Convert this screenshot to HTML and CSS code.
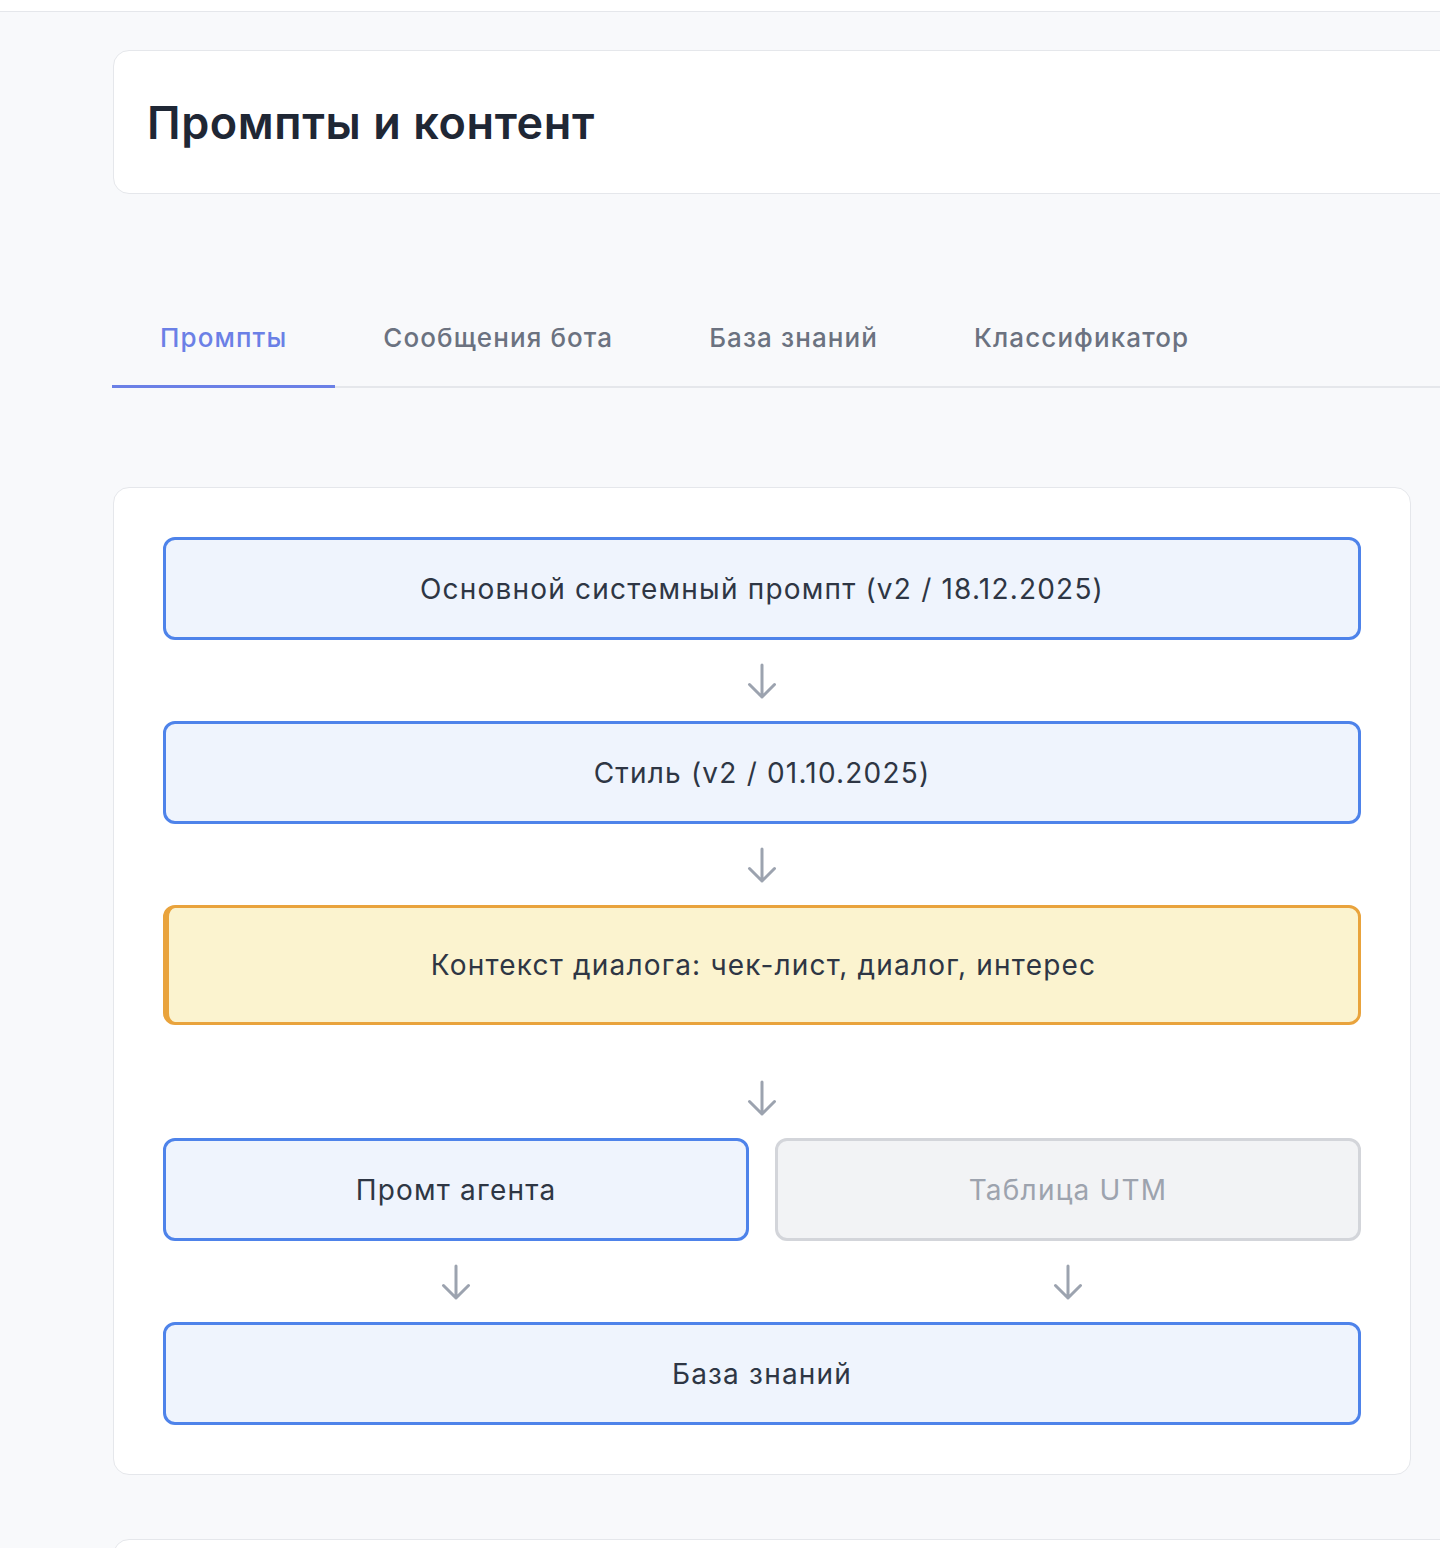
FILE: index.html
```html
<!DOCTYPE html>
<html lang="ru">
<head>
  <meta charset="UTF-8">
  <meta name="viewport" content="width=device-width, initial-scale=1.0">
  <title>Промпты и контент</title>
  <link rel="stylesheet" href="styles.css">
</head>
<body>
  <div class="top-strip"></div>
  <main class="page">
    <div class="header-card">
      <h1>Промпты и контент</h1>
    </div>

    <div class="tabs">
      <div class="tab active">Промпты</div>
      <div class="tab">Сообщения бота</div>
      <div class="tab">База знаний</div>
      <div class="tab">Классификатор</div>
    </div>

    <div class="flow-card">
      <div class="node">Основной системный промпт (v2 / 18.12.2025)</div>
      <div class="arrow">
        <svg width="30" height="36" viewBox="0 0 30 36"><path d="M15 2v32M2.5 21.5 15 34l12.5-12.5"/></svg>
      </div>
      <div class="node">Стиль (v2 / 01.10.2025)</div>
      <div class="arrow">
        <svg width="30" height="36" viewBox="0 0 30 36"><path d="M15 2v32M2.5 21.5 15 34l12.5-12.5"/></svg>
      </div>
      <div class="node node-context">Контекст диалога: чек-лист, диалог, интерес</div>
      <div class="arrow arrow-low">
        <svg width="30" height="36" viewBox="0 0 30 36"><path d="M15 2v32M2.5 21.5 15 34l12.5-12.5"/></svg>
      </div>
      <div class="pair">
        <div class="node">Промт агента</div>
        <div class="node node-off">Таблица UTM</div>
      </div>
      <div class="pair">
        <div class="arrow">
          <svg width="30" height="36" viewBox="0 0 30 36"><path d="M15 2v32M2.5 21.5 15 34l12.5-12.5"/></svg>
        </div>
        <div class="arrow">
          <svg width="30" height="36" viewBox="0 0 30 36"><path d="M15 2v32M2.5 21.5 15 34l12.5-12.5"/></svg>
        </div>
      </div>
      <div class="node">База знаний</div>
    </div>

    <div class="next-card"></div>
  </main>
</body>
</html>
```

FILE: styles.css
```css
body {
  margin: 0;
  background-color: #f8f9fb;
  font-family: Inter, "Noto Sans", sans-serif;
  color: #2f3745;
  overflow-x: hidden;
}
.top-strip {
  height: 11px;
  background: #fff;
  border-bottom: 1px solid #e5e7eb;
}
.page {
  padding: 38px 0 0 113px;
}
.header-card {
  height: 142px;
  margin-right: -40px;
  background: #fff;
  border: 1px solid #e5e7eb;
  border-radius: 16px;
  display: flex;
  align-items: center;
  padding: 0 33px;
}
.header-card h1 {
  margin: 0;
  font-size: 45px;
  font-weight: 600;
  color: #1f2735;
  letter-spacing: 0.6px;
}
.tabs {
  display: flex;
  margin-top: 106px;
  margin-left: -1px;
  box-shadow: inset 0 -2px 0 #e5e7eb;
}
.tab {
  padding: 20px 48px 29px;
  font-size: 26px;
  line-height: 36px;
  font-weight: 500;
  color: #6b7280;
  border-bottom: 3px solid transparent;
  letter-spacing: 1.1px;
}
.tab.active {
  color: #6b80e6;
  border-bottom-color: #6b80e6;
}
.flow-card {
  width: 1198px;
  margin-top: 99px;
  padding: 49px;
  background: #fff;
  border: 1px solid #e5e7eb;
  border-radius: 16px;
}
.node {
  padding: 30.5px 20px;
  font-size: 28px;
  line-height: 36px;
  text-align: center;
  letter-spacing: 1.2px;
  color: #2e3644;
  background: #eff4fd;
  border: 3px solid #4e83ea;
  border-radius: 12px;
}
.node-context {
  padding: 39px 20px;
  background: #fbf3cf;
  border-color: #e9a33c;
  border-left-width: 6px;
}
.node-off {
  background: #f2f3f5;
  border-color: #d3d5da;
  color: #9da3ae;
}
.arrow {
  height: 81px;
  display: flex;
  align-items: center;
  justify-content: center;
}
.arrow-low {
  margin-top: 32px;
}
.arrow svg {
  fill: none;
  stroke: #9ca3af;
  stroke-width: 3;
  stroke-linecap: round;
  stroke-linejoin: round;
}
.pair {
  display: grid;
  grid-template-columns: 1fr 1fr;
  gap: 26px;
}
.next-card {
  height: 60px;
  margin-top: 64px;
  margin-right: -40px;
  background: #fff;
  border: 1px solid #e5e7eb;
  border-radius: 16px;
}
```
